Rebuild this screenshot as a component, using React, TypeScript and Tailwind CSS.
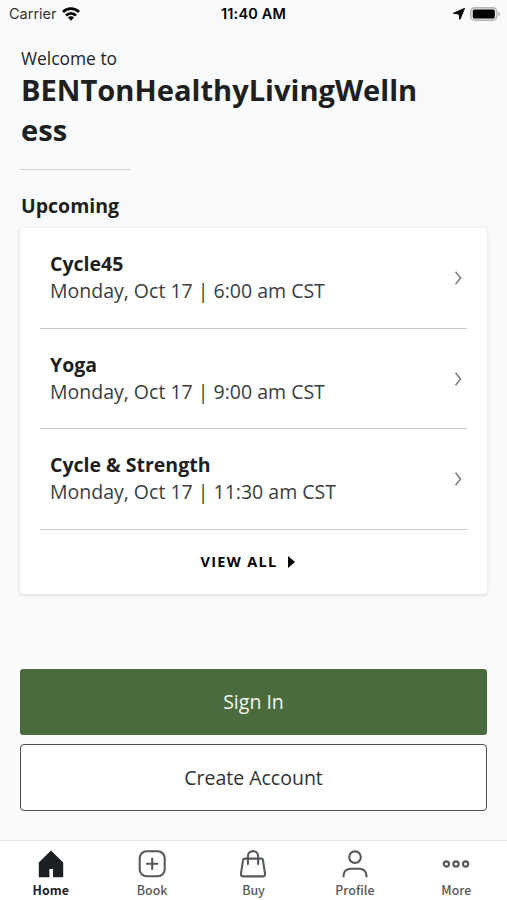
import type { ReactNode } from "react";

const CLASSES = [
  { name: "Cycle45", time: "Monday, Oct 17 | 6:00 am CST" },
  { name: "Yoga", time: "Monday, Oct 17 | 9:00 am CST" },
  { name: "Cycle & Strength", time: "Monday, Oct 17 | 11:30 am CST" },
];

const Icon = ({ children }: { children: ReactNode }) => (
  <svg width="28" height="28" viewBox="0 0 28 28" fill="none" stroke="currentColor" strokeWidth="2.1" strokeLinecap="round" strokeLinejoin="round">
    {children}
  </svg>
);

const TABS = [
  {
    label: "Home",
    active: true,
    icon: (
      <path d="M14 .6 26.2 12.6V27.2H16V19H12.4V27.2H1.8V12.6Z" fill="currentColor" stroke="none" />
    ),
  },
  {
    label: "Book",
    icon: (
      <>
        <rect x="1.7" y="1.3" width="25" height="25" rx="7" />
        <path d="M14.2 8.6v10.4M9 13.8h10.4" />
      </>
    ),
  },
  {
    label: "Buy",
    icon: (
      <>
        <path d="M5.6 8.6H22.4Q23.7 8.6 23.9 9.9L26 23.6Q26.3 26.4 23.6 26.4H4.4Q1.7 26.4 2 23.6L4.1 9.9Q4.3 8.6 5.6 8.6Z" />
        <path d="M8.9 14V6.2a5.1 5.1 0 0 1 10.2 0V14" />
      </>
    ),
  },
  {
    label: "Profile",
    icon: (
      <>
        <circle cx="14" cy="7.2" r="5.8" />
        <path d="M2.5 26.5v-.8c0-4.4 3.4-7 7-7h9c3.6 0 7 2.6 7 7v.8" />
      </>
    ),
  },
  {
    label: "More",
    icon: (
      <>
        <circle cx="4.4" cy="14" r="2.6" />
        <circle cx="14" cy="14" r="2.6" />
        <circle cx="23.6" cy="14" r="2.6" />
      </>
    ),
  },
];

const StatusBar = () => (
  <div className="grid h-7 grid-cols-3 items-center pr-[6px] pl-[9px] font-['Inter',sans-serif] text-[14.5px] leading-7 text-black">
    <div className="flex items-center gap-[5px]">
      <span className="text-[#333]">Carrier</span>
      <svg width="18" height="14" viewBox="0 0 18 14" fill="none" stroke="black" strokeWidth="2.7">
        <path d="M1 5a11.4 11.4 0 0 1 16 0" />
        <path d="M4 8.5a7 7 0 0 1 10 0" />
        <path d="M9 13.7 6 10.6a4.2 4.2 0 0 1 6 0Z" fill="black" stroke="none" />
      </svg>
    </div>
    <span className="pr-[3px] text-center font-semibold tracking-[0.15px]">11:40 AM</span>
    <div className="flex items-center justify-end gap-[5px]">
      <svg width="12" height="12" viewBox="0 0 12 12">
        <path d="M11.5.4 6.9 11.4 6 6 .5 5.3Z" fill="black" stroke="black" strokeWidth="1" strokeLinejoin="round" />
      </svg>
      <svg width="31" height="14" viewBox="0 0 31 14">
        <rect x=".8" y=".8" width="26" height="12.4" rx="3.8" fill="#e4e4e4" stroke="#b5b5b5" strokeWidth="1.4" />
        <rect x="2.8" y="2.6" width="22" height="8.8" rx="1.6" fill="black" />
        <path d="M28.4 4.7a2.5 2.5 0 0 1 0 4.6Z" fill="#a8a8a8" />
      </svg>
    </div>
  </div>
);

const UpcomingCard = () => (
  <section className="h-[366px] rounded-[3px] bg-white px-5 shadow-[0_1px_4px_rgba(0,0,0,0.14)]">
    {CLASSES.map((item) => (
      <div key={item.name} className="flex h-[100.7px] items-center justify-between border-b-[1.5px] border-[#c9c9ca] pr-[4px] pl-[10px]">
        <div className="pb-[2px] text-[19.5px] leading-[27px]">
          <h3 className="font-bold text-[#1d1f21]">{item.name}</h3>
          <p className="text-[#3b3d3f]">{item.time}</p>
        </div>
        <svg width="9" height="14" viewBox="0 0 9 14" fill="none" stroke="#808080" strokeWidth="1.6">
          <path d="m1.5.8 5 6.2-5 6.2" />
        </svg>
      </div>
    ))}
    <button className="flex h-[64px] w-full items-center justify-center gap-[11px] pr-[11px] text-[14.5px] font-bold tracking-[1.3px] text-black">
      VIEW ALL
      <svg width="7" height="12" viewBox="0 0 7 12">
        <path d="M0 0 7 6 0 12Z" />
      </svg>
    </button>
  </section>
);

const TabBar = () => (
  <nav className="grid h-[60px] grid-cols-5 border-t border-[#e3e4e6] bg-white pt-[9px] font-['Noto_Sans_CJK_SC','Noto_Sans',sans-serif] text-[12.4px] font-medium">
    {TABS.map((tab) => (
      <div key={tab.label} className={tab.active ? "flex flex-col items-center text-[#1d2023]" : "flex flex-col items-center text-[#55585b]"}>
        <Icon>{tab.icon}</Icon>
        <span className={tab.active ? "mt-1 leading-[16px] font-bold" : "mt-1 leading-[16px]"}>{tab.label}</span>
      </div>
    ))}
  </nav>
);

export default function App() {
  return (
    <div className="flex h-[900px] w-[507px] flex-col overflow-hidden bg-[#f8fafc] font-['Open_Sans','Noto_Sans',sans-serif] text-[#1d1f21]">
      <StatusBar />
      <main className="flex flex-1 flex-col px-5 pt-[18px]">
        <p className="pl-px text-[17.4px] leading-6 font-medium text-[#222426]">Welcome to</p>
        <h1 className="w-[400px] pl-px text-[29.1px] leading-10 font-bold">
          BENTonHealthyLivingWelln
          <br />
          ess
        </h1>
        <hr className="mt-[19px] w-[111px] border-t border-[#cfd1d3]" />
        <h2 className="mt-[22px] mb-[9px] pl-px text-[19.5px] leading-[27px] font-bold">Upcoming</h2>
        <UpcomingCard />
        <div className="mt-[75px] flex flex-col gap-[9px] text-[19.5px]">
          <button className="h-[66px] rounded-[3px] bg-[#4a6b3e] text-[#f3f8ef]">Sign In</button>
          <button className="h-[67px] rounded-[4px] border-[1.5px] border-[#4c4e50] bg-white text-[#303234]">Create Account</button>
        </div>
      </main>
      <TabBar />
    </div>
  );
}
